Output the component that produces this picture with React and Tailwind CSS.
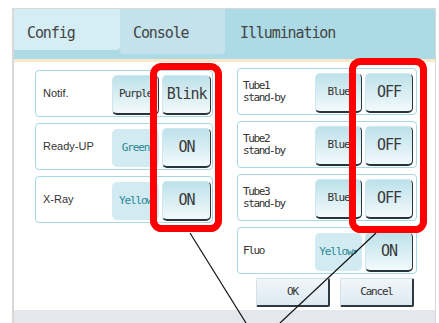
import React from 'react'

const mono = { fontFamily: '"DejaVu Sans Mono", monospace' }

function ToggleBtn({ label, wide = 'w-[49px]' }) {
  return (
    <div
      style={mono}
      className={`${wide} h-[40px] rounded-[5px] border border-[#cfe7ee] border-r-[#27353d] border-b-2 border-b-[#27353d] bg-linear-to-b from-[#bde1ea] to-[#f3fafc] flex items-center justify-center text-[15px] tracking-[-1.1px] text-[#3a3a3a]`}
    >
      {label}
    </div>
  )
}

function ColorBtn({ label, flat, arrow }) {
  if (flat) {
    return (
      <div
        style={mono}
        className="w-[47px] h-[38px] rounded-[5px] bg-[#d2ebf2] flex items-center justify-center text-[11px] tracking-[-1.1px] text-[#2a8796] overflow-hidden whitespace-nowrap"
      >
        {label}
        {arrow && <span className="text-[7px] tracking-normal ml-[1px]">▼</span>}
      </div>
    )
  }
  return (
    <div
      style={mono}
      className="w-[47px] h-[40px] rounded-[5px] border border-[#cfe7ee] border-r-[#27353d] border-b-2 border-b-[#27353d] bg-linear-to-b from-[#bde1ea] to-[#f3fafc] flex items-center justify-center text-[11px] tracking-[-1.1px] text-[#333] overflow-hidden whitespace-nowrap"
    >
      {label}
    </div>
  )
}

function LeftRow({ label, color, flat, state }) {
  return (
    <div className="w-[178px] h-[47px] rounded-[4px] border border-[#a6d7e7] bg-white flex items-center pl-[7px] pr-[1px]">
      <span className="flex-1 text-[11px] text-[#333]" style={{ fontFamily: '"Liberation Sans", sans-serif' }}>
        {label}
      </span>
      <div className="flex items-center gap-[3px] mt-[3px]">
        <ColorBtn label={color} flat={flat} />
        <ToggleBtn label={state} />
      </div>
    </div>
  )
}

function RightRow({ lines, color, flat, arrow, state }) {
  return (
    <div className="w-[180px] h-[47px] rounded-[4px] border border-[#a6d7e7] bg-white flex items-center pl-[5px] pr-[3px]">
      <div style={mono} className="w-[70px] text-[11px] leading-[12px] tracking-[-1.4px] text-[#333]">
        {lines.map((l) => (
          <div key={l}>{l}</div>
        ))}
      </div>
      <div className="flex-1" />
      <div className="flex items-center gap-[3px] mt-[3px]">
        <ColorBtn label={color} flat={flat} arrow={arrow} />
        <ToggleBtn label={state} wide="w-[48px]" />
      </div>
    </div>
  )
}

function FlatBtn({ label }) {
  return (
    <div
      style={mono}
      className="w-[74px] h-[29px] border border-[#d5e2ea] border-r-2 border-b-2 border-r-[#2f3a40] border-b-[#2f3a40] rounded-[2px] bg-linear-to-b from-[#f1f6f9] to-[#dde9f1] flex items-center justify-center text-[11px] tracking-[-1.2px] text-[#333]"
    >
      {label}
    </div>
  )
}

export default function App() {
  return (
    <div className="relative w-[439px] h-[323px] bg-white overflow-hidden pt-[8px] pl-[12px]">
      <div className="w-[424px] h-[315px] border-t border-l-2 border-r border-[#d8d8d8] flex flex-col">
        {/* tab bar */}
        <div className="h-[50px] bg-[#acdbe6] flex items-start text-[15px] tracking-[-1.1px] text-[#444]" style={mono}>
          <div className="w-[106px] h-[41px] bg-[#d5edf4] rounded-br-[4px] flex items-center pl-[13px] pt-[7px]">Config</div>
          <div className="w-[105px] h-[45px] bg-[#c3e2ec] rounded-b-[4px] flex items-center pl-[13px] pt-[7px] pb-[4px]">Console</div>
          <div className="h-[41px] flex items-center pl-[15px] pt-[7px]">Illumination</div>
        </div>
        <div className="h-[3px] bg-[#fbe8c9]" />

        {/* content */}
        <div className="flex-1 bg-white flex pl-[21px] gap-[24px]">
          <div className="flex flex-col gap-[6px] pt-[8px]">
            <LeftRow label="Notif." color="Purple" state="Blink" />
            <LeftRow label="Ready-UP" color="Green" flat state="ON" />
            <LeftRow label="X-Ray" color="Yellow" flat state="ON" />
          </div>
          <div className="flex flex-col gap-[6px] pt-[6px]">
            <RightRow lines={['Tube1', 'stand-by']} color="Blue" state="OFF" />
            <RightRow lines={['Tube2', 'stand-by']} color="Blue" state="OFF" />
            <RightRow lines={['Tube3', 'stand-by']} color="Blue" state="OFF" />
            <RightRow lines={['Fluo']} color="Yellow" flat arrow state="ON" />
            <div className="flex justify-end gap-[10px] pr-[3px] -mt-[2px]">
              <FlatBtn label="OK" />
              <FlatBtn label="Cancel" />
            </div>
          </div>
        </div>
        <div className="h-[13px] bg-[#e4e7eb]" />
      </div>

      {/* annotation overlay */}
      <svg className="absolute inset-0 pointer-events-none" width="439" height="323" viewBox="0 0 439 323">
        <rect x="153.5" y="66.5" width="65" height="162" rx="8" fill="none" stroke="#ff0000" strokeWidth="7" />
        <rect x="352.5" y="61.5" width="71" height="168" rx="8" fill="none" stroke="#ff0000" strokeWidth="7" />
        <line x1="190" y1="233" x2="246" y2="323" stroke="#111" strokeWidth="1.2" />
        <line x1="376" y1="233" x2="280" y2="323" stroke="#111" strokeWidth="1.2" />
      </svg>
    </div>
  )
}
